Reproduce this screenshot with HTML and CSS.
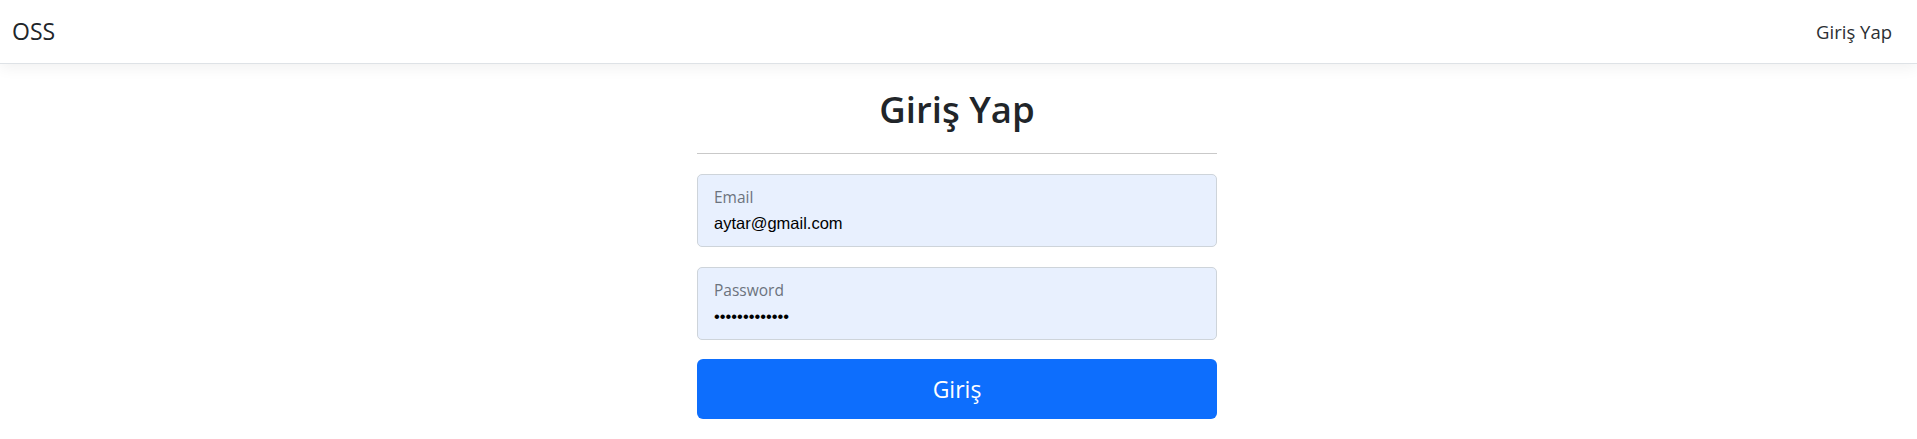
FILE: index.html
```html
<!DOCTYPE html>
<html lang="tr">
<head>
<meta charset="utf-8">
<title>OSS - Giriş Yap</title>
<link rel="stylesheet" href="styles.css">
</head>
<body>
<nav class="navbar">
  <a class="brand" href="#">OSS</a>
  <a class="nav-link" href="#">Giriş Yap</a>
</nav>
<main class="main">
  <form class="login">
    <h1 class="title">Giriş Yap</h1>
    <hr class="divider">
    <div class="field">
      <label class="field-label" for="email">Email</label>
      <input class="field-input" id="email" type="email" value="aytar@gmail.com">
    </div>
    <div class="field">
      <label class="field-label" for="password">Password</label>
      <input class="field-input" id="password" type="password" value="1234567890123">
    </div>
    <button class="btn-submit" type="button">Giriş</button>
  </form>
</main>
</body>
</html>
```
FILE: styles.css
```css
* { box-sizing: border-box; }
html, body { margin: 0; padding: 0; background: #fff; }
body {
  font-family: "Open Sans", "Noto Sans", sans-serif;
  color: #212529;
}
.navbar {
  height: 64px;
  display: flex;
  align-items: center;
  justify-content: space-between;
  padding: 0 25px 0 12px;
  background: #fff;
  border-bottom: 1px solid #dee2e6;
  box-shadow: 0 4px 14px rgba(0, 0, 0, 0.06);
  position: relative;
}
.brand {
  font-size: 23px;
  color: #212529;
  text-decoration: none;
  line-height: 1.5;
}
.nav-link {
  font-size: 18.5px;
  color: #2b2f33;
  text-decoration: none;
  line-height: 1.5;
}
.main {
  display: flex;
  justify-content: center;
  padding: 24px 3px 0 0;
}
.login {
  width: 520px;
  display: flex;
  flex-direction: column;
}
.title {
  margin: 0;
  font-size: 36.5px;
  line-height: 42px;
  font-weight: 600;
  text-align: center;
  color: #212529;
}
.divider {
  margin: 23px 0 20px;
  border: 0;
  border-top: 1px solid #c9c9c9;
  height: 0;
}
.field {
  height: 73px;
  border: 1px solid #ced4da;
  border-radius: 5px;
  background: #e8f0fe;
  padding: 12px 16px 0;
  display: flex;
  flex-direction: column;
  gap: 6px;
  margin-bottom: 20px;
}
.field-label {
  font-size: 15.5px;
  line-height: 20px;
  color: #6c737d;
}
.field-input {
  border: 0;
  padding: 0;
  margin: 0;
  background: transparent;
  font-family: "Liberation Sans", Arial, sans-serif;
  font-size: 16.5px;
  line-height: 20px;
  height: 20px;
  color: #000;
  outline: none;
  width: 100%;
}
.btn-submit {
  margin-top: -1px;
  height: 60px;
  border: 0;
  border-radius: 6px;
  background: #0d6efd;
  color: #fff;
  font-family: "Open Sans", "Noto Sans", sans-serif;
  font-size: 23px;
  line-height: 1.5;
  cursor: pointer;
}
```
